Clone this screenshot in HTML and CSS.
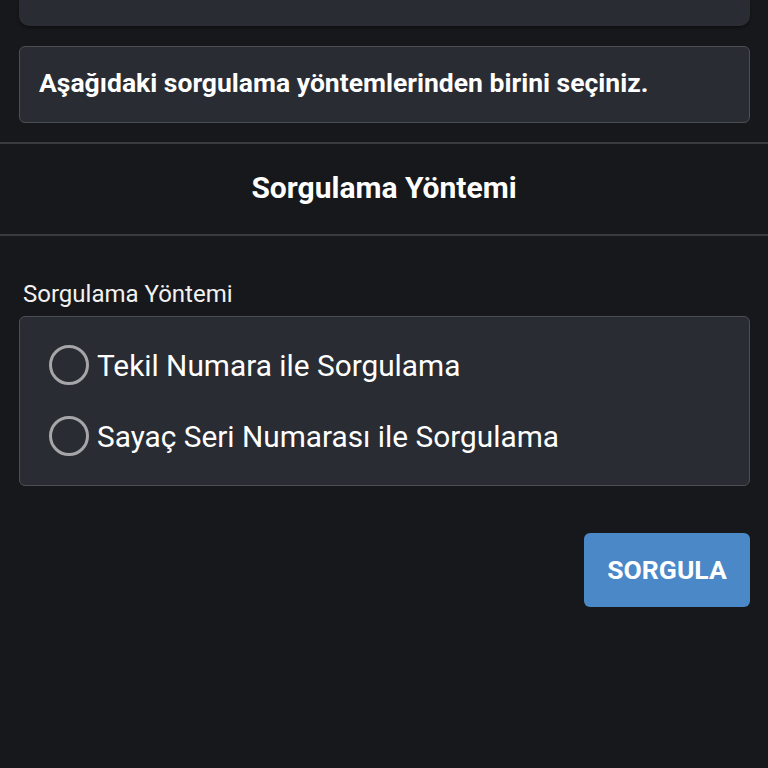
FILE: index.html
```html
<!DOCTYPE html>
<html lang="tr">
<head>
<meta charset="utf-8">
<link rel="stylesheet" href="styles.css">
</head>
<body>
<div class="page">
  <div class="top-card"></div>
  <div class="notice">Aşağıdaki sorgulama yöntemlerinden birini seçiniz.</div>
  <div class="section-head">Sorgulama Yöntemi</div>
  <div class="form">
    <div class="field-label">Sorgulama Yöntemi</div>
    <div class="radio-box">
      <label class="radio-row"><span class="radio"></span><span class="radio-text">Tekil Numara ile Sorgulama</span></label>
      <label class="radio-row"><span class="radio"></span><span class="radio-text">Sayaç Seri Numarası ile Sorgulama</span></label>
    </div>
    <div class="actions">
      <button class="btn">SORGULA</button>
    </div>
  </div>
</div>
</body>
</html>
```
FILE: styles.css
```css
html, body {
  margin: 0;
  padding: 0;
  background: #17181b;
  height: 100%;
}
body {
  font-family: Roboto, "Noto Sans", sans-serif;
  color: #ffffff;
}
.page {
  display: flex;
  flex-direction: column;
}
.top-card {
  margin: 0 18px 0 19px;
  height: 26px;
  background: #292c33;
  border-radius: 0 0 10px 10px;
  box-shadow: 0 2px 3px rgba(0,0,0,0.35);
}
.notice {
  margin: 20px 18px 0 19px;
  height: 77px;
  box-sizing: border-box;
  background: #292c33;
  border: 1px solid #4b4e55;
  border-radius: 6px;
  padding: 0 19px 4px;
  display: flex;
  align-items: center;
  font-size: 26.5px;
  font-weight: 700;
}
.section-head {
  margin-top: 19px;
  height: 94px;
  box-sizing: border-box;
  border-top: 2px solid #3a3b3f;
  border-bottom: 2px solid #3a3b3f;
  padding-bottom: 4px;
  display: flex;
  align-items: center;
  justify-content: center;
  font-size: 30px;
  font-weight: 700;
}
.form {
  padding: 0 18px 0 19px;
  display: flex;
  flex-direction: column;
}
.field-label {
  margin-top: 44px;
  padding-left: 4px;
  font-size: 24px;
  line-height: 28px;
  color: #f2f2f2;
}
.radio-box {
  margin-top: 8px;
  height: 170px;
  box-sizing: border-box;
  background: #292c33;
  border: 1px solid #4b4e55;
  border-radius: 6px;
  padding: 28px 0 0 29px;
  display: flex;
  flex-direction: column;
  gap: 31px;
}
.radio-row {
  display: flex;
  align-items: center;
  height: 40px;
}
.radio {
  width: 40px;
  height: 40px;
  box-sizing: border-box;
  border: 3px solid #a6a6a8;
  border-radius: 50%;
  flex: none;
}
.radio-text {
  margin-left: 8px;
  font-size: 29.8px;
  color: #ffffff;
}
.actions {
  margin-top: 47px;
  display: flex;
  justify-content: flex-end;
}
.btn {
  width: 166px;
  height: 74px;
  border: none;
  border-radius: 6px;
  background: #4a88c7;
  color: #ffffff;
  font-family: Roboto, sans-serif;
  font-size: 26.5px;
  font-weight: 700;
  padding: 0 0 2px;
}
```
